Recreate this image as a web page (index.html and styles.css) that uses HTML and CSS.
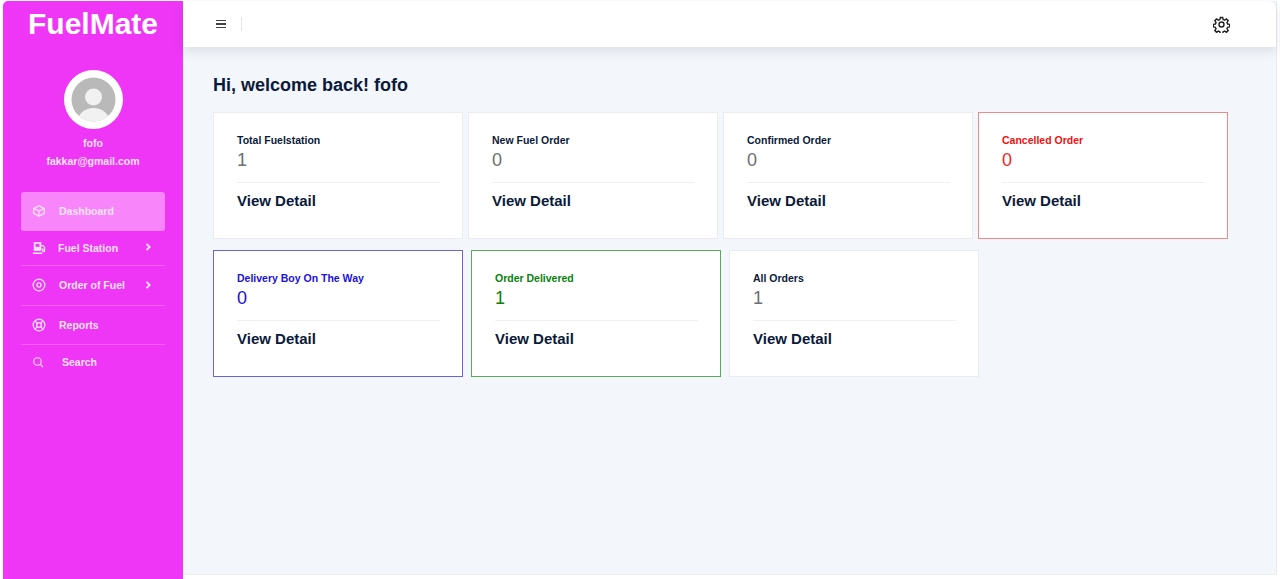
FILE: index.html
```html
<!DOCTYPE html>
<html lang="en">
<head>
    <meta charset="UTF-8">
    <title>FuelMate</title>
    <link rel="stylesheet" href="styles.css">
</head>
<body>
    <div class="app">
        <aside class="sidebar">
            <h1 class="brand">FuelMate</h1>
            <div class="profile">
                <svg class="avatar" width="59" height="59" viewBox="0 0 59 59">
                    <defs><clipPath id="avatar-clip"><circle cx="29.5" cy="29.5" r="22"/></clipPath></defs>
                    <circle cx="29.5" cy="29.5" r="29.5" fill="#fff"/>
                    <circle cx="29.5" cy="29.5" r="22" fill="#b9b9b9"/>
                    <g clip-path="url(#avatar-clip)" fill="#f1f1f1">
                        <circle cx="29.5" cy="27" r="8.5"/>
                        <ellipse cx="29.5" cy="52" rx="16" ry="14"/>
                    </g>
                </svg>
                <p class="profile-name">fofo</p>
                <p class="profile-mail">fakkar@gmail.com</p>
            </div>
            <nav class="menu">
                <a class="menu-item active">
                    <svg class="menu-icon" viewBox="0 0 24 24"><path d="M21 16V8l-9-5-9 5v8l9 5z"/><path d="M3.300 7.500 12 12l8.700-4.500M12 21.500V12"/></svg>
                    <span>Dashboard</span>
                </a>
                <a class="menu-item station">
                    <svg class="menu-icon" viewBox="0 0 24 24"><path class="solid" d="M3 2h13v15H3z"/><path d="M1.500 21h16M16 8h3l2.500 3v5.500a1.500 1.500 0 0 1-3 0V14h-2"/><path class="cut" d="M6 5h7v5H6z"/></svg>
                    <span>Fuel Station</span>
                    <svg class="chevron" viewBox="0 0 10 10"><path d="M3.500 1.800 6.700 5 3.500 8.200"/></svg>
                </a>
                <a class="menu-item order">
                    <svg class="menu-icon" viewBox="0 0 24 24"><circle cx="12" cy="12" r="10"/><circle cx="12" cy="12" r="3.500"/></svg>
                    <span>Order of Fuel</span>
                    <svg class="chevron" viewBox="0 0 10 10"><path d="M3.500 1.800 6.700 5 3.500 8.200"/></svg>
                </a>
                <a class="menu-item reports">
                    <svg class="menu-icon" viewBox="0 0 24 24"><circle cx="12" cy="12" r="10"/><circle cx="12" cy="12" r="4"/><path d="m5 5 4.200 4.200M19 5l-4.200 4.200M5 19l4.200-4.200M19 19l-4.200-4.200"/></svg>
                    <span>Reports</span>
                </a>
                <a class="menu-item search">
                    <svg class="menu-icon" viewBox="0 0 24 24"><circle cx="11" cy="11" r="7.500"/><path d="m17 17 5 5"/></svg>
                    <span>Search</span>
                </a>
            </nav>
        </aside>
        <div class="main">
            <header class="topbar">
                <button class="burger" type="button"><i></i><i></i><i></i></button>
                <span class="topbar-line"></span>
                <svg class="gear" width="17" height="17" viewBox="0 0 24 24"><path d="M10.300 2h3.400l.6 3 2.100.9 2.600-1.700 2.400 2.400-1.700 2.600.9 2.100 3 .6v3.400l-3 .6-.9 2.100 1.700 2.600-2.400 2.400-2.600-1.700-2.100.9-.6 3h-3.400l-.6-3-2.100-.9-2.600 1.700-2.400-2.400 1.700-2.600-.9-2.100-3-.6v-3.400l3-.6.9-2.100-1.700-2.600 2.400-2.400 2.600 1.700 2.100-.9z"/><circle cx="12" cy="12" r="3.500"/></svg>
            </header>
            <main class="content">
                <h2 class="welcome">Hi, welcome back! fofo</h2>
                <div class="card-row first">
                    <div class="card">
                        <h3>Total Fuelstation</h3>
                        <p class="count">1</p>
                        <a class="detail">View Detail</a>
                    </div>
                    <div class="card">
                        <h3>New Fuel Order</h3>
                        <p class="count">0</p>
                        <a class="detail">View Detail</a>
                    </div>
                    <div class="card">
                        <h3>Confirmed Order</h3>
                        <p class="count">0</p>
                        <a class="detail">View Detail</a>
                    </div>
                    <div class="card red">
                        <h3>Cancelled Order</h3>
                        <p class="count">0</p>
                        <a class="detail">View Detail</a>
                    </div>
                </div>
                <div class="card-row second">
                    <div class="card blue">
                        <h3>Delivery Boy On The Way</h3>
                        <p class="count">0</p>
                        <a class="detail">View Detail</a>
                    </div>
                    <div class="card green">
                        <h3>Order Delivered</h3>
                        <p class="count">1</p>
                        <a class="detail">View Detail</a>
                    </div>
                    <div class="card">
                        <h3>All Orders</h3>
                        <p class="count">1</p>
                        <a class="detail">View Detail</a>
                    </div>
                </div>
            </main>
        </div>
    </div>
</body>
</html>
```

FILE: styles.css
```css
* {
    box-sizing: border-box;
}
html, body {
    height: 100%;
}
body {
    margin: 0;
    overflow: hidden;
    background-color: #fff;
    font-family: 'Liberation Sans', Arial, sans-serif;
    color: #0b1a3a;
}
.app {
    display: flex;
    height: 579px;
    padding: 1px 0 0 3px;
}
.sidebar {
    width: 180px;
    flex-shrink: 0;
    background-color: #ef36f6;
    border-radius: 5px 0 0 0;
    color: #fff;
}
.brand {
    margin: 7px 0 0;
    font-size: 30px;
    line-height: 32px;
    font-weight: bold;
    text-align: center;
}
.profile {
    margin-top: 30px;
    text-align: center;
}
.avatar {
    display: block;
    margin: 0 auto;
}
.profile p {
    margin: 0;
    font-size: 10.500px;
    font-weight: bold;
    color: #fbe4fc;
    line-height: 18px;
}
.profile-name {
    padding-top: 5px;
}
.menu {
    margin: 22px 18px 0;
    display: flex;
    flex-direction: column;
}
.menu-item {
    display: flex;
    align-items: center;
    height: 39px;
    padding-left: 11px;
    font-size: 10.500px;
    font-weight: bold;
    color: #fbe4fc;
    border-bottom: 1px solid #f55bf8;
    position: relative;
}
.menu-item.active {
    padding-bottom: 2px;
    background-color: #f985fb;
    border-radius: 3px;
    border-bottom: 0;
}
.menu-item.station {
    height: 35px;
}
.menu-item.order {
    height: 40px;
    padding-bottom: 2px;
}
.menu-item.search {
    height: 35px;
    padding-bottom: 2px;
    border-bottom: 0;
}
.menu-icon {
    width: 14px;
    height: 14px;
    margin-right: 13px;
    fill: none;
    stroke: #fbe4fc;
    stroke-width: 2.200;
    flex-shrink: 0;
}
.menu-icon .solid {
    fill: #fbe4fc;
    stroke: none;
}
.menu-icon .cut {
    fill: #ef36f6;
    stroke: none;
}
.menu-item.station .menu-icon {
    margin-right: 12px;
}
.menu-item.search .menu-icon {
    width: 12px;
    height: 12px;
    margin-right: 18px;
}
.chevron {
    position: absolute;
    right: 12px;
    top: 50%;
    margin-top: -6px;
    width: 10px;
    height: 10px;
    fill: none;
    stroke: #fbe4fc;
    stroke-width: 1.800;
}
.main {
    flex: 1;
    min-width: 0;
    height: 574px;
    margin-right: 3px;
    background-color: #f3f6fa;
    border-right: 1px solid #e9ebee;
    border-bottom: 1px solid #eceef1;
}
.topbar {
    display: flex;
    align-items: center;
    height: 46px;
    padding: 0 46px 0 33px;
    background-color: #fff;
    border-radius: 0 8px 0 0;
    box-shadow: 0 4px 12px rgba(40, 60, 90, 0.12);
}
.burger {
    display: flex;
    flex-direction: column;
    gap: 2px;
    width: 10px;
    padding: 0;
    border: 0;
    background: none;
}
.burger i {
    display: block;
    height: 1.500px;
    width: 10px;
    background-color: #444;
}
.topbar-line {
    width: 1px;
    height: 14px;
    margin-left: 15px;
    background-color: #e3e6ec;
}
.gear {
    margin-left: auto;
    fill: none;
    stroke: #222;
    stroke-width: 2;
}
.content {
    padding: 27px 0 0 30px;
}
.welcome {
    margin: 0 0 16px;
    font-size: 18px;
    line-height: 22px;
    font-weight: bold;
    color: #0b1a3a;
}
.card-row {
    display: flex;
}
.card-row.first {
    gap: 5px;
    margin-bottom: 11px;
}
.card-row.second {
    gap: 8px;
}
.card {
    width: 250px;
    height: 127px;
    padding: 20px 22px 0 23px;
    background-color: #fff;
    border: 1px solid #e9edf3;
}
.card h3 {
    margin: 0;
    font-size: 10.500px;
    line-height: 14px;
    font-weight: bold;
    color: #0b1a3a;
}
.card .count {
    margin: 3px 0 0;
    padding-bottom: 11px;
    font-size: 18px;
    line-height: 21px;
    color: #6c6f75;
    border-bottom: 1px solid #eef0f4;
}
.detail {
    display: block;
    margin-top: 8px;
    font-size: 15px;
    line-height: 20px;
    font-weight: bold;
    color: #0b1a3a;
}
.card.red {
    border-color: #f08a8a;
}
.card.red h3 {
    color: #f01010;
}
.card.red .count {
    color: #f01f2a;
}
.card.blue {
    border-color: #6a62e0;
}
.card.blue h3, .card.blue .count {
    color: #1a10e0;
}
.card.green {
    border-color: #5aa85a;
}
.card.green h3, .card.green .count {
    color: #0a800a;
}
```
